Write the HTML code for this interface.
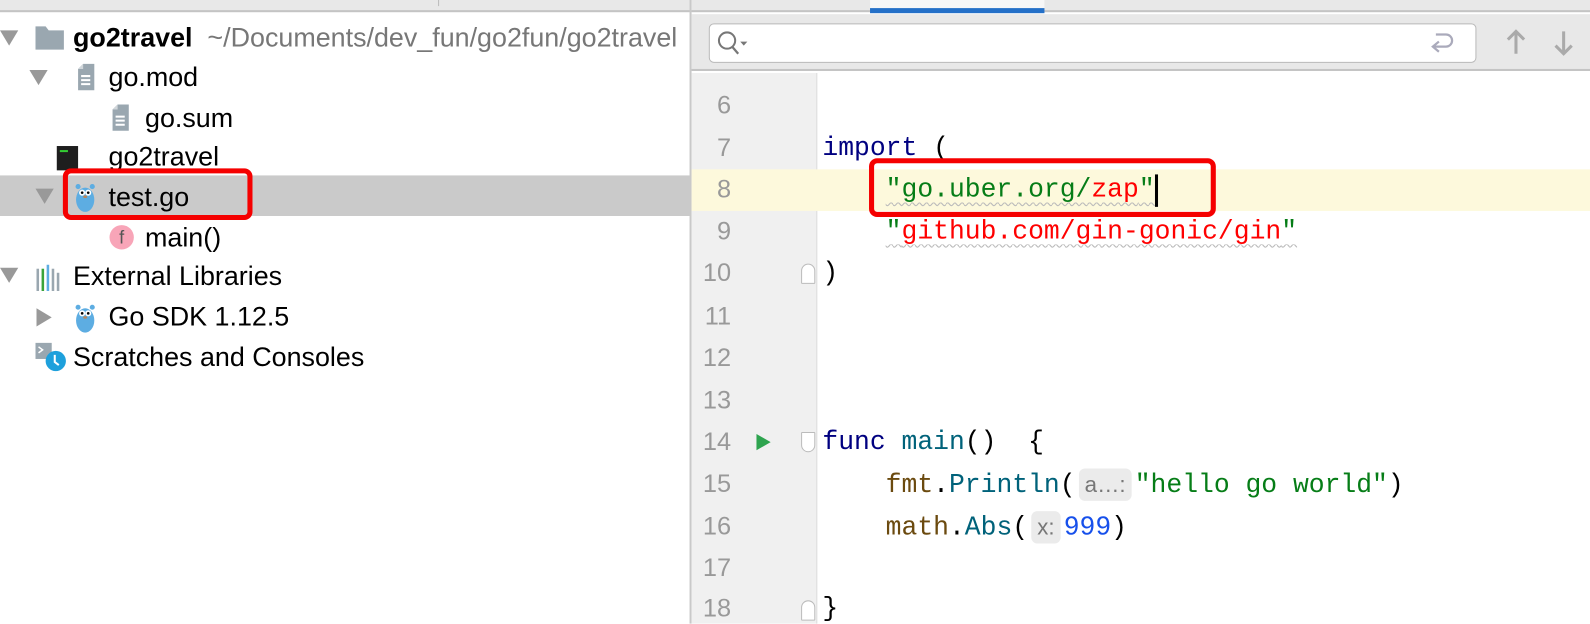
<!DOCTYPE html>
<html><head><meta charset="utf-8"><style>
*{margin:0;padding:0;box-sizing:border-box}
body{width:1590px;height:624px;overflow:hidden;background:#fff;position:relative;font-family:"Liberation Sans",sans-serif}
#w{position:absolute;left:0;top:0;width:1568px;height:615px;transform:scale(1.01403);transform-origin:0 0;overflow:hidden}
.abs{position:absolute}
.t{position:absolute;font-size:26.5px;color:#000;white-space:nowrap;line-height:28px}
.tri{position:absolute;width:0;height:0;border-left:9px solid transparent;border-right:9px solid transparent;border-top:15px solid #999}
.trir{position:absolute;width:0;height:0;border-top:9px solid transparent;border-bottom:9px solid transparent;border-left:15px solid #999}
.ln{position:absolute;left:681px;width:40px;text-align:right;font-family:"Liberation Sans",sans-serif;font-size:25px;color:#999;line-height:30px}
.code{position:absolute;font-family:"Liberation Mono",monospace;font-size:26px;line-height:30px;white-space:pre;color:#000}
.fold{position:absolute;left:790px;width:14px;height:20px;border:1.5px solid #bbb;background:#fff}
.hint{display:inline-block;background:#ebebeb;color:#777;border-radius:6px;font-family:"Liberation Sans",sans-serif;font-size:22px;padding:0 6px;line-height:32px;margin:0 3px}
.wavy{text-decoration:underline wavy #bbb;text-decoration-thickness:1px;text-underline-offset:5px}
</style></head><body><div id="w">
<div class="abs" style="left:0;top:0;width:681px;height:12px;background:#e8e8e8;border-bottom:2px solid #c4c4c4"></div>
<div class="abs" style="left:432px;top:0;width:1px;height:6px;background:#bbb"></div>
<div class="abs" style="left:0;top:173px;width:681px;height:40px;background:#cacaca"></div>
<div class="tri" style="left:0;top:30px"></div>
<svg class="abs" style="left:34px;top:24px" width="30" height="26"><path d="M1 2h10l3 4h15v19H1z" fill="#9aa7b0"/></svg>
<div class="t" style="left:72px;top:23px"><b>go2travel</b> <span style="color:#777">&nbsp;~/Documents/dev_fun/go2fun/go2travel</span></div>

<div class="tri" style="left:29px;top:69px"></div>
<svg class="abs" style="left:76px;top:62px" width="18" height="28"><path d="M6 1h11v26H1V6z" fill="#9aa7b0"/><path d="M1 6l5-5v5z" fill="#d0d6da"/><path d="M4 13h9M4 17h9M4 21h9" stroke="#fff" stroke-width="2"/></svg>
<div class="t" style="left:107px;top:62px">go.mod</div>

<svg class="abs" style="left:110px;top:102px" width="18" height="28"><path d="M6 1h11v26H1V6z" fill="#9aa7b0"/><path d="M1 6l5-5v5z" fill="#d0d6da"/><path d="M4 13h9M4 17h9M4 21h9" stroke="#fff" stroke-width="2"/></svg>
<div class="t" style="left:143px;top:102px">go.sum</div>

<div class="abs" style="left:56px;top:144px;width:21px;height:24px;background:#1e1e1e"></div>
<div class="abs" style="left:59px;top:148px;width:8px;height:2px;background:#3c3"></div>
<div class="t" style="left:107px;top:140px">go2travel</div>

<div class="tri" style="left:35px;top:186px"></div>
<svg class="abs" style="left:73px;top:180px" width="22" height="30"><ellipse cx="11" cy="17" rx="9" ry="12" fill="#5dade2"/><circle cx="4" cy="4" r="2.5" fill="#5dade2"/><circle cx="18" cy="4" r="2.5" fill="#5dade2"/><circle cx="8" cy="10" r="3" fill="#fff"/><circle cx="14" cy="10" r="3" fill="#fff"/><circle cx="8" cy="10" r="1.3"/><circle cx="14" cy="10" r="1.3"/><ellipse cx="11" cy="14" rx="2" ry="1.3" fill="#b8865b"/></svg>
<div class="t" style="left:107px;top:180px">test.go</div>
<div class="abs" style="left:62px;top:166px;width:187px;height:51px;border:5px solid #f50000;border-radius:8px"></div>

<div class="abs" style="left:108px;top:222px;width:24px;height:24px;border-radius:50%;background:#f8a5b8;color:#555;font-size:18px;text-align:center;line-height:24px">f</div>
<div class="t" style="left:143px;top:220px">main()</div>

<div class="tri" style="left:0;top:264px"></div>
<svg class="abs" style="left:35px;top:261px" width="24" height="26"><rect x="1" y="4" width="2.5" height="22" fill="#9aa7b0"/><rect x="6" y="4" width="2.5" height="22" fill="#3aa33a"/><rect x="11" y="0" width="2.5" height="26" fill="#5dade2"/><rect x="16" y="4" width="2.5" height="22" fill="#9aa7b0"/><rect x="21" y="8" width="2.5" height="18" fill="#9aa7b0"/></svg>
<div class="t" style="left:72px;top:258px">External Libraries</div>

<div class="trir" style="left:36px;top:304px"></div>
<svg class="abs" style="left:73px;top:299px" width="22" height="30"><ellipse cx="11" cy="17" rx="9" ry="12" fill="#5dade2"/><circle cx="4" cy="4" r="2.5" fill="#5dade2"/><circle cx="18" cy="4" r="2.5" fill="#5dade2"/><circle cx="8" cy="10" r="3" fill="#fff"/><circle cx="14" cy="10" r="3" fill="#fff"/><circle cx="8" cy="10" r="1.3"/><circle cx="14" cy="10" r="1.3"/><ellipse cx="11" cy="14" rx="2" ry="1.3" fill="#b8865b"/></svg>
<div class="t" style="left:107px;top:298px">Go SDK 1.12.5</div>

<svg class="abs" style="left:35px;top:338px" width="32" height="30"><rect x="0" y="0" width="16" height="16" fill="#9aa7b0"/><path d="M3 4l4 3-4 3" stroke="#fff" stroke-width="1.5" fill="none"/><circle cx="20" cy="18" r="10" fill="#1ea0dc"/><path d="M19 12v7l4 3" stroke="#fff" stroke-width="2" fill="none"/></svg>
<div class="t" style="left:72px;top:338px">Scratches and Consoles</div>

<div class="abs" style="left:680px;top:0;width:2px;height:624px;background:#c9c9c9"></div>

<div class="abs" style="left:682px;top:0;width:908px;height:12px;background:#e8e8e8;border-bottom:2px solid #c4c4c4"></div>
<div class="abs" style="left:858px;top:0;width:172px;height:8px;background:#f7f7f7"></div>
<div class="abs" style="left:858px;top:8px;width:172px;height:5px;background:#2470c8"></div>
<div class="abs" style="left:682px;top:14px;width:908px;height:56px;background:#e8e8e8;border-bottom:2px solid #c4c4c4"></div>
<div class="abs" style="left:699px;top:23px;width:757px;height:39px;background:#fff;border:1px solid #b9b9b9;border-radius:5px"></div>
<svg class="abs" style="left:706px;top:28px" width="40" height="30"><circle cx="11" cy="12" r="8" stroke="#777" stroke-width="2" fill="none"/><path d="M16 18l6 7" stroke="#777" stroke-width="2.2"/><path d="M24 13h7l-3.5 4z" fill="#777"/></svg>
<svg class="abs" style="left:1408px;top:28px" width="30" height="30"><path d="M8 6h10a6 6 0 010 12H6" stroke="#aab" stroke-width="2.2" fill="none"/><path d="M11 13l-6 5 6 5" stroke="#aab" stroke-width="2.2" fill="none"/></svg>
<svg class="abs" style="left:1480px;top:28px" width="30" height="28"><path d="M15 3v22M7 11l8-8 8 8" stroke="#aaa" stroke-width="3" fill="none"/></svg>
<svg class="abs" style="left:1530px;top:28px" width="24" height="28"><path d="M12 3v22M4 17l8 8 8-8" stroke="#aaa" stroke-width="3" fill="none"/></svg>

<div class="abs" style="left:682px;top:72px;width:124px;height:552px;background:#f0f0f0;border-right:1px solid #ddd"></div>
<div class="abs" style="left:682px;top:167px;width:908px;height:41px;background:#fdf9dc"></div>

<div class="ln" style="top:89px">6</div>
<div class="ln" style="top:131px">7</div>
<div class="ln" style="top:172px">8</div>
<div class="ln" style="top:213px">9</div>
<div class="ln" style="top:254px">10</div>
<div class="ln" style="top:297px">11</div>
<div class="ln" style="top:338px">12</div>
<div class="ln" style="top:380px">13</div>
<div class="ln" style="top:421px">14</div>
<div class="ln" style="top:462px">15</div>
<div class="ln" style="top:504px">16</div>
<div class="ln" style="top:545px">17</div>
<div class="ln" style="top:585px">18</div>

<div class="fold" style="top:260px;border-radius:7px 7px 1px 1px"></div>
<div class="fold" style="top:426px;border-radius:1px 1px 7px 7px"></div>
<div class="fold" style="top:592px;border-radius:7px 7px 1px 1px"></div>
<svg class="abs" style="left:745px;top:427px" width="16" height="18"><path d="M1 1l14 8-14 8z" fill="#2ea44f"/></svg>

<div class="code" style="left:811px;top:131px"><span style="color:#000080">import</span> (</div>
<div class="code" style="left:811px;top:172px">    <span class="wavy"><span style="color:#067d17">"go.uber.org/</span><span style="color:#f00">zap</span><span style="color:#067d17">"</span></span></div>
<div class="abs" style="left:1139px;top:172px;width:3px;height:32px;background:#000"></div>
<div class="code" style="left:811px;top:213px">    <span class="wavy"><span style="color:#067d17">"</span><span style="color:#f00">github.com/gin-gonic/gin</span><span style="color:#067d17">"</span></span></div>
<div class="code" style="left:811px;top:254px">)</div>
<div class="code" style="left:811px;top:421px"><span style="color:#000080">func</span> <span style="color:#00627a">main</span>()  {</div>
<div class="code" style="left:811px;top:462px">    <span style="color:#6b4a0f">fmt</span>.<span style="color:#00627a">Println</span>(<span class="hint">a…:</span><span style="color:#067d17">"hello go world"</span>)</div>
<div class="code" style="left:811px;top:504px">    <span style="color:#6b4a0f">math</span>.<span style="color:#00627a">Abs</span>(<span class="hint">x:</span><span style="color:#1750eb">999</span>)</div>
<div class="code" style="left:811px;top:585px">}</div>

<div class="abs" style="left:857px;top:156px;width:342px;height:58px;border:5px solid #f50000;border-radius:8px"></div>
</div></body></html>
